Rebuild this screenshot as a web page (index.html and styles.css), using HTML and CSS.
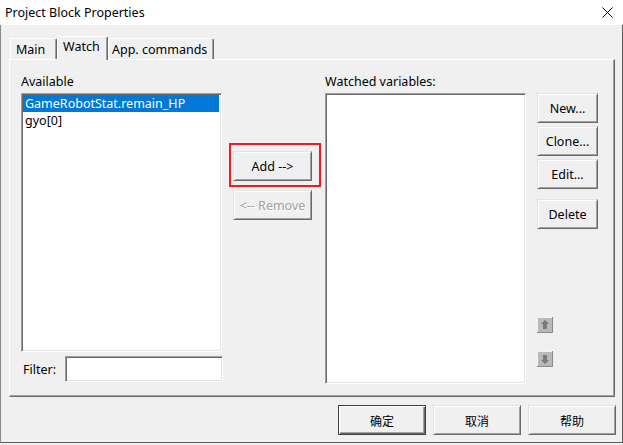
FILE: index.html
```html
<!DOCTYPE html>
<html>
<head>
<meta charset="utf-8">
<link rel="stylesheet" href="styles.css">
</head>
<body>
<div class="window">
  <div class="titlebar">
    <span class="title">Project Block Properties</span>
    <svg class="close" width="11" height="11" viewBox="0 0 11 11"><path d="M0.5 0.5 L10.5 10.5 M10.5 0.5 L0.5 10.5" stroke="#000" stroke-width="1" fill="none"/></svg>
  </div>
  <div class="client">
    <div class="tabs">
      <div class="tab tab-main">Main</div>
      <div class="tab tab-watch active">Watch</div>
      <div class="tab tab-app">App. commands</div>
    </div>
    <div class="panel">
      <div class="col col-avail">
        <div class="label">Available</div>
        <div class="listbox list-avail">
          <div class="item sel">GameRobotStat.remain_HP</div>
          <div class="item">gyo[0]</div>
        </div>
        <div class="filter">
          <span class="filter-label">Filter:</span>
          <div class="input"></div>
        </div>
      </div>
      <div class="col col-mid">
        <div class="add-wrap">
          <div class="btn btn-mid">Add --&gt;</div>
          <div class="redbox"></div>
        </div>
        <div class="btn btn-mid btn-remove disabled">&lt;-- Remove</div>
      </div>
      <div class="col col-watch">
        <div class="label">Watched variables:</div>
        <div class="listbox list-watch"></div>
      </div>
      <div class="col col-btns">
        <div class="btn btn-side">New...</div>
        <div class="btn btn-side gap3">Clone...</div>
        <div class="btn btn-side gap3">Edit...</div>
        <div class="btn btn-side gap10">Delete</div>
        <svg class="arrow arrow-up" width="16" height="16" viewBox="0 0 16 16">
          <rect x="0" y="0" width="16" height="16" fill="#b9b9b9"/>
          <path d="M0 15.5 H15.5 V0" stroke="#8a8a8a" fill="none"/>
          <path d="M0.5 15 V0.5 H15" stroke="#f4f4f4" fill="none"/>
          <path d="M8 3 L12 7 L10 7 L10 12 L6 12 L6 7 L4 7 Z" fill="#7a7a7a"/>
        </svg>
        <svg class="arrow arrow-down" width="16" height="16" viewBox="0 0 16 16">
          <rect x="0" y="0" width="16" height="16" fill="#b9b9b9"/>
          <path d="M0 15.5 H15.5 V0" stroke="#8a8a8a" fill="none"/>
          <path d="M0.5 15 V0.5 H15" stroke="#f4f4f4" fill="none"/>
          <path d="M8 13 L12 9 L10 9 L10 4 L6 4 L6 9 L4 9 Z" fill="#7a7a7a"/>
        </svg>
      </div>
    </div>
    <div class="footer">
      <div class="btn btn-foot default">确定</div>
      <div class="btn btn-foot">取消</div>
      <div class="btn btn-foot">帮助</div>
    </div>
  </div>
</div>
</body>
</html>
```

FILE: styles.css
```css
* { box-sizing: border-box; }
html, body {
  margin: 0;
  padding: 0;
  background: #f0f0f0;
}
body {
  width: 623px;
  height: 445px;
  overflow: hidden;
  font-family: "Noto Sans", "Noto Sans CJK SC", sans-serif;
  font-size: 12.5px;
  color: #000;
}
.window {
  width: 623px;
  height: 443px;
  display: flex;
  flex-direction: column;
}
.titlebar {
  height: 25px;
  background: #fff;
  display: flex;
  align-items: center;
  justify-content: space-between;
  padding-left: 5px;
  padding-right: 10px;
  flex: none;
}
.title {
  font-size: 12.5px;
  line-height: 25px;
}
.close { display: block; }
.client {
  flex: 1;
  background: #f0f0f0;
  border-left: 1px solid #8a8a8a;
  border-right: 1px solid #5e5e5e;
  border-bottom: 1px solid #5e5e5e;
  padding-left: 8px;
  padding-right: 7px;
  display: flex;
  flex-direction: column;
}
.tabs {
  height: 34px;
  display: flex;
  align-items: flex-end;
  padding-left: 1px;
  flex: none;
}
.tab {
  height: 21px;
  background: #f0f0f0;
  border-top: 1px solid #fff;
  border-left: 1px solid #fff;
  border-right: 1px solid #696969;
  box-shadow: inset -1px 0 0 #a0a0a0;
  border-radius: 2px 2px 0 0;
  line-height: 20px;
  white-space: nowrap;
}
.tab-main { width: 47px; padding-left: 5px; padding-top: 1px; }
.tab-watch {
  width: 51px;
  height: 24px;
  margin-bottom: -1px;
  position: relative;
  z-index: 2;
  padding-left: 5px;
  line-height: 19px;
}
.tab-app { width: 106px; padding-left: 3px; padding-top: 1px; }
.panel {
  height: 338px;
  width: 606px;
  flex: none;
  border-top: 1px solid #fff;
  border-left: 1px solid #fff;
  border-right: 1px solid #696969;
  border-bottom: 1px solid #696969;
  box-shadow: inset -1px -1px 0 #a0a0a0;
  display: flex;
  padding-left: 11px;
  padding-top: 14px;
}
.col {
  display: flex;
  flex-direction: column;
  flex: none;
}
.col-avail { width: 202px; }
.col-mid { width: 79px; margin-left: 10px; padding-top: 77px; }
.col-watch { width: 201px; margin-left: 13px; }
.col-btns { width: 61px; margin-left: 11px; padding-top: 19px; }
.label {
  height: 16px;
  line-height: 16px;
  margin-bottom: 3px;
}
.listbox {
  background: #fff;
  border-top: 1px solid #a0a0a0;
  border-left: 1px solid #a0a0a0;
  border-right: 1px solid #fff;
  border-bottom: 1px solid #fff;
  box-shadow: inset 1px 1px 0 #696969, inset -1px -1px 0 #e3e3e3;
  padding: 1px 2px 1px 1px;
}
.list-avail { width: 201px; height: 259px; }
.list-watch { width: 201px; height: 291px; }
.item {
  height: 17px;
  line-height: 17px;
  padding-left: 2px;
  white-space: nowrap;
}
.item.sel {
  background: #0078d7;
  color: #fff;
}
.filter {
  display: flex;
  align-items: center;
  margin-top: 4px;
  height: 26px;
}
.filter-label {
  width: 44px;
  padding-left: 2px;
}
.input {
  width: 158px;
  height: 26px;
  background: #fff;
  border-top: 1px solid #a0a0a0;
  border-left: 1px solid #a0a0a0;
  border-right: 1px solid #fff;
  border-bottom: 1px solid #fff;
  box-shadow: inset 1px 1px 0 #696969, inset -1px -1px 0 #e3e3e3;
}
.btn {
  background: #f0f0f0;
  border-top: 1px solid #e3e3e3;
  border-left: 1px solid #e3e3e3;
  border-right: 1px solid #696969;
  border-bottom: 1px solid #696969;
  box-shadow: inset 1px 1px 0 #fff, inset -1px -1px 0 #a0a0a0;
  display: flex;
  align-items: center;
  justify-content: center;
  height: 30px;
  white-space: nowrap;
  flex: none;
}
.btn-mid { width: 79px; }
.add-wrap { position: relative; }
.redbox {
  position: absolute;
  left: -4px;
  top: -8px;
  width: 92px;
  height: 44px;
  border: 2px solid #ed1c24;
}
.btn-remove { margin-top: 9px; }
.disabled {
  color: #a0a0a0;
  text-shadow: 1px 1px 0 #fff;
}
.btn-side { width: 61px; }
.gap3 { margin-top: 3px; }
.gap10 { margin-top: 10px; }
.arrow { display: block; flex: none; }
.arrow-up { margin-top: 88px; }
.arrow-down { margin-top: 18px; }
.footer {
  display: flex;
  justify-content: flex-end;
  gap: 7px;
  margin-top: 8px;
  width: 615px;
  margin-left: -8px;
}
.btn-foot {
  width: 88px;
  font-family: "Noto Sans CJK SC", sans-serif;
  font-size: 12px;
}
.btn-foot.default {
  border-color: #404040;
  box-shadow: inset 1px 1px 0 #fff, inset -1px -1px 0 #696969, inset -2px -2px 0 #a0a0a0;
}
```
